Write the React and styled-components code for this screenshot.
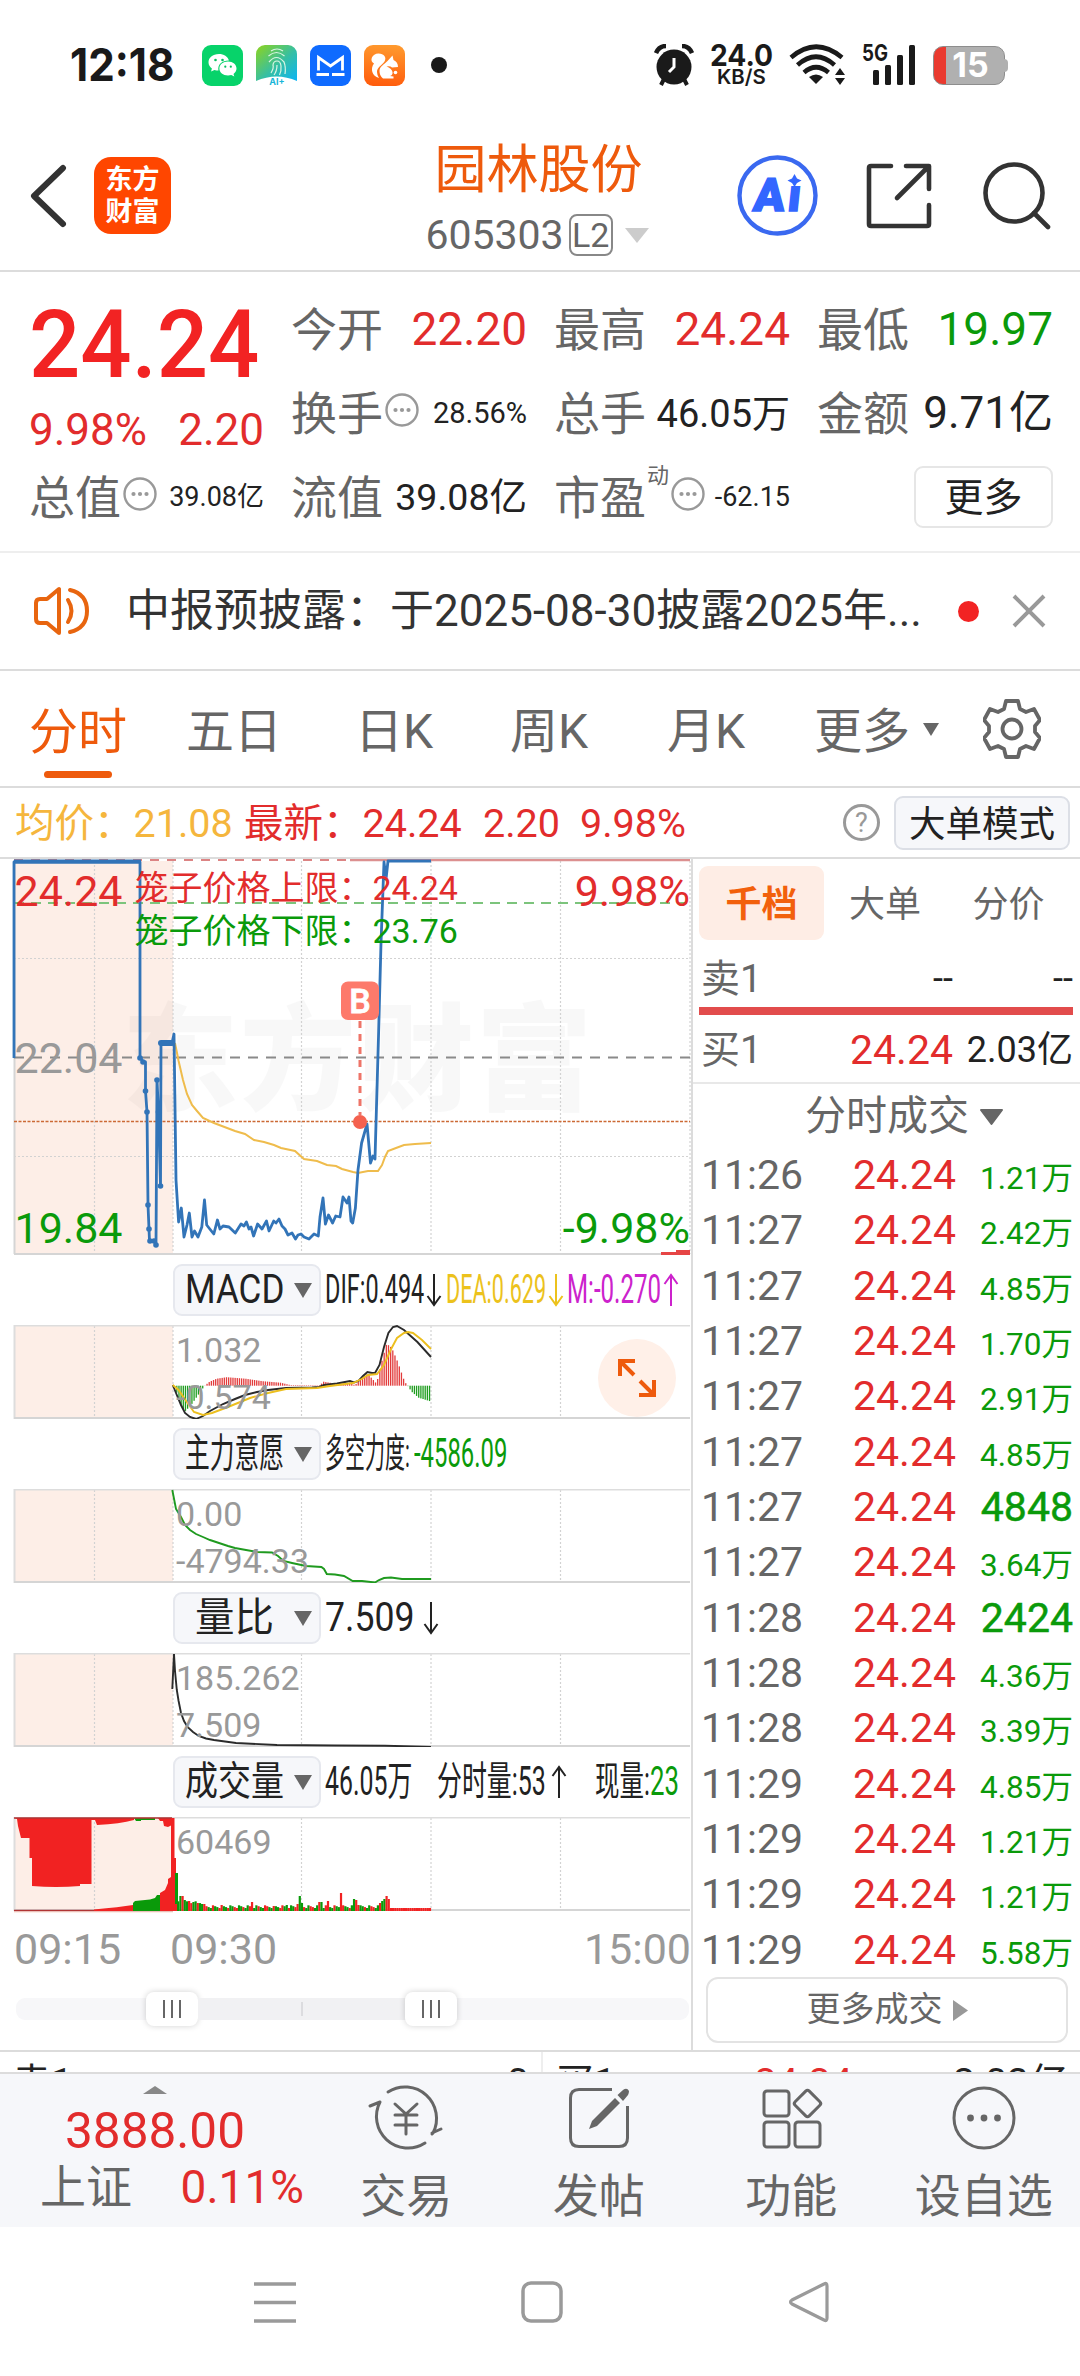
import React, { useLayoutEffect, useRef, useState } from 'react'
import styled, { createGlobalStyle } from 'styled-components'

const RED = '#e22c2c'
const GREEN = '#0a9a0a'
const ORANGE = '#ee5a0c'

const stats = [
  { label: '今开', value: '22.20', size: 46, color: RED },
  { label: '最高', value: '24.24', size: 46, color: RED },
  { label: '最低', value: '19.97', size: 46, color: GREEN },
  { label: '换手', value: '28.56%', size: 29, more: true },
  { label: '总手', value: '46.05万', size: 38 },
  { label: '金额', value: '9.71亿', size: 44 },
]

const tabs = [
  { label: '分时', width: 157, active: true },
  { label: '五日', width: 169 },
  { label: '日K', width: 155 },
  { label: '周K', width: 157 },
  { label: '月K', width: 147 },
]

const trades = [
  ['11:26', '1.21万'],
  ['11:27', '2.42万'],
  ['11:27', '4.85万'],
  ['11:27', '1.70万'],
  ['11:27', '2.91万'],
  ['11:27', '4.85万'],
  ['11:27', '4848'],
  ['11:27', '3.64万'],
  ['11:28', '2424'],
  ['11:28', '4.36万'],
  ['11:28', '3.39万'],
  ['11:29', '4.85万'],
  ['11:29', '1.21万'],
  ['11:29', '1.21万'],
  ['11:29', '5.58万'],
]

// chart coordinates are in pixels of the 691px wide chart column
const priceLine =
  '14,199 14,3 140,3 140,198 143,203 145.5,203 145.5,232 147,253 148,346 149,370 149.5,382 155,382 156,386 157,221 158.5,253 160.5,327 161,184 172,184 174,175 176,321 178.6,363 181.3,349 184,378 187,366 189.3,354 192,378 194.5,372 198,378 201.8,368 204.5,341 206.7,366 209.8,370 213.8,375 217.4,361 220,370 223,367 229,368 235.3,374 241,365 244,367 246.4,363 249,370 251,368 253.6,377 257.6,365 262,370 266.5,362 269,372 273.7,362 276,364 279,360 282,367 285,370 288,376 292,374 295.5,380 298,376 301,375 304,378 309,380 314,375 318.3,377 320,358 323,339 325.4,365 328.5,356 332.6,364 335.7,357 340,358 343,338 347,344 349,338 351,362 352.7,364 355.4,349 358,311 361.6,284 367,265 370.5,304 373,297 375,300 378.6,174 381,84 384,3 386,20 388,2 431,2'
const avgLine =
  '175,184 178.6,202 183,221 187,235 192,246 197,252 203,259 214,264 235,272 245,275 254,281 264,283 274,286 281,289 295,292 304,300 317,302 327,306 336,307 342,310 353,313 358,314 368,312 378,312 382,306 385,298 388,292 396,289 404,286 415,285 431,284'
const difLine =
  '172.8,60 176,68 181,80 185,88 190,92 196,94 203,91 210,86 223,79 235,74 245,70 257,67 268,65 286,63 312,62.5 319,62 324,60 337,58.5 350,56 354,57.5 358.5,56 363,51 367.4,47 372,48 375,48 379.5,40 384,22 388.4,8 393,2 397,1 404,5 417.4,17 431,32'
const deaLine =
  '172.8,60 178.6,65 187.5,78 194,87 203,90 212,88 228,82 250,73 268,68 286,64 317,63 330,61 353,58 361.6,54 368,50 377,49 384,40 390.6,25 397,13 404,8 408,7 413,8 422,15 431,24'
const powerLine =
  '172.3,1 176,20 181,28 185,36 190,41 196,45 203,48 210,51 219,54 228,57 235,59 246,61 257,63 272,63.5 278,67 283.5,72 292,74 306,77 321.4,78 324,80 326.8,85 335,85.5 344,87 352.7,92 362,92 375,93.5 379,91 384,89 391,88.5 402,90 418,90 431,90'
const ratioLine =
  '172.3,36 174,1 175,18 176.8,37 178.6,48 181,60 184,68 187.5,74 193,79 198.7,83 206,85.5 214,87 236,90 277,92 335,92.5 385,92.7 431,94'

// histogram outline as [x, height] stops, interpolated bar by bar
const macdStops = [
  [174, 0], [179, -16], [184, -26], [190, -20], [197, -10], [204, 0], [209, 4], [216, 7], [226, 8.5],
  [245, 7], [262, 4.5], [280, 3], [290, 0.6], [319, 0.4], [323, 4], [335, 2], [350, 3], [354, 0.5], [360, 6],
  [367, 12], [376, 2], [380, 20], [386, 42], [391, 38], [397, 24], [404, 4], [407, 0], [411, -6],
  [418, -12], [431, -16],
]
const macdBars = []
for (let x = 174; x <= 431; x += 2.16) {
  const i = macdStops.findIndex(s => s[0] >= x)
  const [x1, h1] = macdStops[i]
  const [x0, h0] = macdStops[Math.max(0, i - 1)]
  const h = x1 === x0 ? h1 : h0 + ((h1 - h0) * (x - x0)) / (x1 - x0)
  macdBars.push({ x, h })
}

const volumePeaks = { 2: 15, 3: 15, 4: 11, 6: 10, 8: 9, 10: 8, 13: 7, 21: 6, 35: 9, 45: 5, 51: 6, 56: 7, 57: 15, 58: 8, 66: 9, 67: 9, 70: 10, 76: 18, 82: 12, 83: 11, 84: 6, 94: 8, 95: 10, 96: 12, 97: 15, 98: 12 }
const volumeBars = Array.from({ length: 118 }, (_, i) => ({
  x: 175 + i * 2.17,
  h: i > 98 ? 3 : volumePeaks[i] || 3 + ((i * 7) % 4) * 0.9 + (i < 14 ? 4 : 0),
  up: i > 98 || (i * 5) % 7 < 3 || i === 76,
}))

// squeezes its text sideways into a given width
const Fit = ({ w, children }) => {
  const ref = useRef(null)
  const [scale, setScale] = useState(1)
  useLayoutEffect(() => {
    setScale(w / ref.current.offsetWidth)
  }, [w, children])
  return (
    <FitBox $w={w}>
      <FitInner ref={ref} style={{ transform: `scaleX(${scale})` }}>{children}</FitInner>
    </FitBox>
  )
}

const MoreDots = () => (
  <DotsSvg width="34" height="34" viewBox="0 0 34 34">
    <circle cx="17" cy="17" r="15.5" fill="none" stroke="#999" strokeWidth="2.4" />
    <circle cx="10.5" cy="17" r="2.1" fill="#999" />
    <circle cx="17" cy="17" r="2.1" fill="#999" />
    <circle cx="23.5" cy="17" r="2.1" fill="#999" />
  </DotsSvg>
)

const Arrow = ({ up }) => (
  <svg width="17" height="34" viewBox="0 0 17 34">
    <path d={up ? 'M9 33V2M2.5 11L9 2L15.5 11' : 'M9 1V32M2.5 23L9 32L15.5 23'} fill="none" stroke="currentColor" strokeWidth="2" />
  </svg>
)

const Grid = ({ height, time }) => (
  <>
    <rect x="14" y="0" width="159" height={time ? height + 2 : height} fill="#fdeee7" />
    {[94.5, 173, 301.5, 431, 560.5].map(x => (
      <line key={x} x1={x} x2={x} y1="1" y2={height} stroke="#d2d2d2" strokeWidth="1.2" strokeDasharray="2 2" />
    ))}
    <path d={`M14.5 0V${height}`} stroke="#ddd" strokeWidth="2" />
    <path d="M14 .8H690" stroke="#ddd" strokeWidth="1.6" />
    <path d={`M14 ${height - 1}H690`} stroke="#d5d5d5" strokeWidth="2" />
  </>
)

const StatusBar = () => (
  <Status>
    <Clock><Fit w={104}>12:18</Fit></Clock>
    <AppIcons>
      <svg width="41" height="41" viewBox="0 0 41 41">
        <rect width="41" height="41" rx="9" fill="#07d36a" />
        <path d="M17 9C10.500 9 6.500 12.800 6.500 17.300c0 2.700 1.400 4.800 3.400 6.300l-.8 3 3.300-1.700c1.400.4 2.600.6 4 .6-1-6.500 4.200-10.200 10.500-10C25.800 11.500 21.800 9 17 9z" fill="#fff" />
        <path d="M26 16.500c-5 0-8.600 3.100-8.600 7s3.600 7 8.600 7c1.200 0 2.300-.2 3.300-.5l3 1.500-.8-2.600c1.900-1.300 3-3.200 3-5.400 0-3.900-3.500-7-8.500-7z" fill="#fff" />
        <g fill="#07c160"><circle cx="13.500" cy="15" r="1.300" /><circle cx="20.500" cy="15" r="1.300" /><circle cx="23.300" cy="21.700" r="1.100" /><circle cx="28.800" cy="21.700" r="1.100" /></g>
      </svg>
      <svg width="41" height="41" viewBox="0 0 41 41">
        <defs>
          <linearGradient id="finger" x1="0" y1="0" x2="1" y2="1">
            <stop offset="0" stopColor="#8fd41c" /><stop offset=".55" stopColor="#35bfa4" /><stop offset="1" stopColor="#0cb4f5" />
          </linearGradient>
        </defs>
        <path d="M9 0h23a9 9 0 0 1 9 9v27Q20.500 27 0 36V9a9 9 0 0 1 9-9z" fill="url(#finger)" />
        <g fill="none" stroke="#d9f5e4" strokeWidth="1.200">
          <path d="M15 6q6-4 12 0M12.500 11q8-7 16 0M13 17q7.500-9 15 0 2 5 1 12M15 28q3-5 2-8 .5-4 4-4t4 5-1.500 9M18 30q3-4 3-10" />
        </g>
        <text x="21" y="40" fontSize="9" fontFamily="Inter, sans-serif" fontWeight="700" fill="#18b5d8" textAnchor="middle">AI+</text>
      </svg>
      <svg width="41" height="41" viewBox="0 0 41 41">
        <rect width="41" height="41" rx="9" fill="#0f6bff" />
        <path d="M8.500 25.500V12.500L20.500 21 32.500 12.500V25.500M6.500 29.500H19M22 29.500H34.500" fill="none" stroke="#fff" strokeWidth="2.800" />
      </svg>
      <svg width="41" height="41" viewBox="0 0 41 41">
        <defs>
          <linearGradient id="squirrel" x1=".7" y1="0" x2=".6" y2="1">
            <stop offset="0" stopColor="#ff9a2e" /><stop offset="1" stopColor="#ff5d0d" />
          </linearGradient>
        </defs>
        <rect width="41" height="41" rx="9" fill="url(#squirrel)" />
        <path d="M15 33C8 31 6 24 10 18.500C5 16 8 8.500 14.500 8.500C20 8.500 23 12.500 20.500 16.500C17.500 21 13 22 13 27Q13 30 15 33Z" fill="#fff" />
        <path d="M15.500 26C15.500 21.500 20 19.500 23.500 16L28.500 10.500L29.500 15Q34 17 34 22L28 22.500Q26 20.500 22.500 21.500Q27.500 23 28.500 27Q29 30 26 31L29.500 31.500V33.500H19Q15.500 31 15.500 26Z" fill="#fff" />
        <circle cx="31.500" cy="27.500" r="1.800" fill="#fff" />
      </svg>
    </AppIcons>
    <StatusDot />
    <StatusRight>
      <svg width="40" height="42" viewBox="0 0 40 42">
        <circle cx="20" cy="23" r="17.500" fill="#1a1a1a" />
        <path d="M2 9Q5 2 12 2M38 9Q35 2 28 2" stroke="#1a1a1a" strokeWidth="4.500" fill="none" />
        <path d="M10 35L7 41M30 35L33 41" stroke="#1a1a1a" strokeWidth="4" />
        <path d="M20 14V23L15 28" fill="none" stroke="#fff" strokeWidth="3" />
      </svg>
      <NetSpeed>
        <Speed><Fit w={63}>24.0</Fit></Speed>
        <SpeedUnit><Fit w={49}>KB/S</Fit></SpeedUnit>
      </NetSpeed>
      <svg width="57" height="42" viewBox="0 0 57 42">
        <g fill="none" stroke="#1a1a1a" strokeWidth="4.600">
          <path d="M2 13.500Q27 -8 53 13.500" /><path d="M8.500 21Q27 4.500 45.500 21" /><path d="M15 28.500Q27 18 39.500 28.500" />
        </g>
        <path d="M20 33Q27 28 34 33L27 40Z" fill="#1a1a1a" />
        <path d="M51 24L56 31H46ZM51 41L56 34H46Z" fill="#1a1a1a" />
      </svg>
      <Signal>
        <Gen><Fit w={26}>5G</Fit></Gen>
        <svg width="55" height="42" viewBox="0 0 55 42">
          <g fill="#1a1a1a"><rect x="11" y="26" width="6" height="15" rx="1.500" /><rect x="23" y="21" width="6" height="20" rx="1.500" /><rect x="35" y="11" width="6" height="30" rx="1.500" /><rect x="47" y="1" width="6" height="40" rx="1.500" /></g>
        </svg>
      </Signal>
      <Battery><span>15</span></Battery>
    </StatusRight>
  </Status>
)

const Header = () => (
  <HeaderBar>
    <HeaderLeft>
      <svg width="38" height="64" viewBox="0 0 38 64">
        <path d="M34 4L5 32L34 60" fill="none" stroke="#333" strokeWidth="6" strokeLinecap="round" strokeLinejoin="round" />
      </svg>
      <Logo><span>东方</span><span>财富</span></Logo>
    </HeaderLeft>
    <Title>
      <StockName>园林股份</StockName>
      <StockCode>
        605303<Level>L2</Level>
        <svg width="26" height="17" viewBox="0 0 26 17"><path d="M1 1H25L13 16Z" fill="#ccc" /></svg>
      </StockCode>
    </Title>
    <HeaderRight>
      <AiButton>
        <svg width="81" height="81" viewBox="0 0 81 81">
          <circle cx="40.500" cy="40.500" r="38" fill="none" stroke="#3a69f0" strokeWidth="4.400" />
          <path d="M57.500 19L60 23.500 64.500 25.500 60 28 57.500 32 55 28 50.500 25.500 55 23.500Z" fill="#3366ff" />
        </svg>
        <AiText>A<i>ı</i></AiText>
      </AiButton>
      <svg width="66" height="66" viewBox="0 0 66 66">
        <path d="M25 3H5Q3 3 3 5V61Q3 63 5 63H61Q63 63 63 61V42M40 3H63V26M62 4L31 35" fill="none" stroke="#333" strokeWidth="4.600" strokeLinecap="round" strokeLinejoin="round" />
      </svg>
      <svg width="68" height="68" viewBox="0 0 68 68">
        <circle cx="31" cy="31" r="28.500" fill="none" stroke="#333" strokeWidth="4.600" />
        <path d="M51 51L65 65" stroke="#333" strokeWidth="4.600" strokeLinecap="round" />
      </svg>
    </HeaderRight>
  </HeaderBar>
)

const Quote = () => (
  <QuoteGrid>
    <PriceCell>
      <Price><Fit w={230}>24.24</Fit></Price>
      <Change><span>9.98%</span><span>2.20</span></Change>
    </PriceCell>
    {stats.map(s => (
      <Stat key={s.label}>
        <StatLabel>{s.label}</StatLabel>
        {s.more && <MoreDots />}
        <StatValue $size={s.size} $color={s.color}>{s.value}</StatValue>
      </Stat>
    ))}
    <Stat><StatLabel>总值</StatLabel><MoreDots /><StatValue $size={27}>39.08亿</StatValue></Stat>
    <Stat><StatLabel>流值</StatLabel><StatValue $size={37.5}>39.08亿</StatValue></Stat>
    <Stat>
      <StatLabel>市盈</StatLabel><Sup>动</Sup><MoreDots /><StatValue $size={27}>-62.15</StatValue>
    </Stat>
    <Stat><MoreButton>更多</MoreButton></Stat>
  </QuoteGrid>
)

const News = () => (
  <NewsBar>
    <svg width="58" height="50" viewBox="0 0 58 50">
      <g fill="none" stroke="#e8650f" strokeWidth="4" strokeLinejoin="round" strokeLinecap="round">
        <path d="M26 3V47L14 37H7Q3 37 3 33V17Q3 13 7 13H14Z" />
        <path d="M35 14Q42 25 35 36M37 4Q54 8 54 25T37 46" />
      </g>
    </svg>
    <NewsText>中报预披露：于2025-08-30披露2025年...</NewsText>
    <NewsDot />
    <svg width="34" height="34" viewBox="0 0 34 34"><path d="M2 2L32 32M32 2L2 32" stroke="#999" strokeWidth="4" /></svg>
  </NewsBar>
)

const PeriodTabs = () => (
  <TabBar>
    {tabs.map(t => (
      <Tab key={t.label} $w={t.width} $active={t.active}><span>{t.label}</span></Tab>
    ))}
    <Tab $w={169}>
      <span>更多</span>
      <svg width="18" height="15" viewBox="0 0 18 15"><path d="M1 1H17L9 14Z" fill="#666" /></svg>
    </Tab>
    <svg width="58" height="60" viewBox="-29 -30 58 60">
      <path d="M-6 -28H6L8 -20L14 -17L22 -20L28 -9L23 -3V3L28 9L22 20L14 17L8 20L6 28H-6L-8 20L-14 17L-22 20L-28 9L-23 3V-3L-28 -9L-22 -20L-14 -17L-8 -20Z" fill="none" stroke="#666" strokeWidth="3.800" strokeLinejoin="round" />
      <circle r="9.500" fill="none" stroke="#666" strokeWidth="3.800" />
    </svg>
  </TabBar>
)

const InfoRow = () => (
  <Info>
    <InfoText $color="#f5b63d" $w={229}>均价：21.08</InfoText>
    <InfoText $color={RED} $w={239}>最新：24.24</InfoText>
    <InfoText $color={RED} $w={97}>2.20</InfoText>
    <InfoText $color={RED}>9.98%</InfoText>
    <Help>?</Help>
    <ModeButton>大单模式</ModeButton>
  </Info>
)

const PriceChart = () => (
  <ChartSvg width="691" height="396" viewBox="0 0 691 396">
    <rect x="14" y="2" width="159" height="393" fill="#fdeee7" />
    <text x="122" y="242" fontSize="116" fontWeight="900" fill="#000" opacity=".022" textLength="470">东方财富</text>
    {[94.5, 173, 301.5, 431, 560.5, 690].map(x => (
      <line key={x} x1={x} x2={x} y1="2" y2="395" stroke="#d2d2d2" strokeWidth="1.2" strokeDasharray="2 2" />
    ))}
    <path d="M14 99.500H690M14 297.500H690" stroke="#d2d2d2" strokeWidth="1.200" strokeDasharray="2 2" />
    <path d="M14.500 2V395M14 395H690" stroke="#d5d5d5" strokeWidth="2" fill="none" />
    <path d="M14 1H350" stroke="#dc8484" strokeWidth="2" strokeDasharray="9 8" />
    <path d="M350 1H690" stroke="#dc9090" strokeWidth="2.400" />
    <path d="M14 44H690" stroke="#7cc47c" strokeWidth="2" strokeDasharray="10 7" />
    <path d="M14 198.500H690" stroke="#8a8a8a" strokeWidth="2.200" strokeDasharray="10 8" />
    <path d="M14 262.500H690" stroke="#cc6a35" strokeWidth="1.500" strokeDasharray="3 1.500" />
    <path d="M661 395V393H676V391H690V396H661Z" fill="#e64545" />
    <text x="14.500" y="46.500" fontSize="43" fill={RED}>24.24</text>
    <text x="14.500" y="214" fontSize="43" fill="#999">22.04</text>
    <text x="14.500" y="383.500" fontSize="43" fill={GREEN}>19.84</text>
    <text x="690" y="46.500" fontSize="43" fill={RED} textAnchor="end">9.98%</text>
    <text x="690" y="383.500" fontSize="43" fill={GREEN} textAnchor="end">-9.98%</text>
    <polyline points={avgLine} fill="none" stroke="#efbc4c" strokeWidth="2" />
    <polyline points={priceLine} fill="none" stroke="#3274b8" strokeWidth="2.8" strokeLinejoin="round" />
    <path d="M14 2.500H141" stroke="#3274b8" strokeWidth="4" />
    <path d="M161 184H172" stroke="#3274b8" strokeWidth="6" strokeLinecap="round" />
    {[[140, 199], [143, 203], [145.5, 232], [147, 253], [148, 346], [149, 370], [150, 382], [154, 382], [156, 386], [157, 221], [158.5, 253], [160.5, 327]].map(([x, y]) => (
      <circle key={`${x}-${y}`} cx={x} cy={y} r="2.8" fill="#3274b8" />
    ))}
    <text x="134.500" y="40.500" fontSize="34" fill={RED}>笼子价格上限：24.24</text>
    <text x="134.500" y="83.500" fontSize="34" fill={GREEN}>笼子价格下限：23.76</text>
    <path d="M360 162V256" stroke="#ee7468" strokeWidth="3" strokeDasharray="7 6" />
    <circle cx="360" cy="263" r="7" fill="#f4614f" />
    <rect x="341" y="122.500" width="38" height="38.500" rx="7" fill="#fd7a6b" />
    <text x="360" y="153.500" fontSize="34" fontWeight="500" fill="#fff" stroke="#fff" strokeWidth=".8" textAnchor="middle">B</text>
  </ChartSvg>
)

const Picker = ({ children, w }) => (
  <PickerBox>
    <PickerLabel><Fit w={w}>{children}</Fit></PickerLabel>
    <svg width="18" height="15" viewBox="0 0 18 15"><path d="M0 0H18L9 15Z" fill="#666" /></svg>
  </PickerBox>
)

const Indicators = () => (
  <>
    <IndicatorHead>
      <Picker w={99}>MACD</Picker>
      <Reading $color="#222" $w={121}><Fit w={99}>DIF:0.494</Fit><Gap $w={1} /><Arrow /></Reading>
      <Reading $color="#ecc21c" $w={121}><Fit w={100}>DEA:0.629</Fit><Gap $w={1} /><Arrow /></Reading>
      <Reading $color="#cc22cc"><Fit w={94}>M:-0.270</Fit><Gap $w={1} /><Arrow up /></Reading>
    </IndicatorHead>
    <PanelBox>
      <ChartSvg width="691" height="94" viewBox="0 0 691 94">
        <Grid height={94} />
        {macdBars.map(b => (
          <rect key={b.x} x={b.x} y={b.h > 0 ? 60.7 - b.h : 60.7} width="1.3" height={Math.abs(b.h)} fill={b.h > 0 ? '#e23b3b' : '#1f9d1f'} />
        ))}
        <polyline points={difLine} fill="none" stroke="#2b2b2b" strokeWidth="1.9" />
        <polyline points={deaLine} fill="none" stroke="#ecbf1e" strokeWidth="1.9" />
        <text x="176" y="36.500" fontSize="34" fill="#999">1.032</text>
        <text x="176" y="84" fontSize="34" fill="#999">-0.574</text>
      </ChartSvg>
      <Expand>
        <svg width="40" height="40" viewBox="0 0 40 40">
          <path d="M3 18V3H18M4 4L17 17M37 22V37H22M36 36L23 23" fill="none" stroke={ORANGE} strokeWidth="4" />
        </svg>
      </Expand>
    </PanelBox>
    <IndicatorHead>
      <Picker w={99}>主力意愿</Picker>
      <Reading $color="#222" $w={89}><Fit w={85}>多空力度:</Fit></Reading>
      <Reading $color={GREEN}><Fit w={93}>-4586.09</Fit></Reading>
    </IndicatorHead>
    <ChartSvg width="691" height="94" viewBox="0 0 691 94">
      <Grid height={94} />
      <polyline points={powerLine} fill="none" stroke="#1f9a1f" strokeWidth="1.9" />
      <text x="176" y="36.500" fontSize="34" fill="#999">0.00</text>
      <text x="176" y="84" fontSize="34" fill="#999">-4794.33</text>
    </ChartSvg>
    <IndicatorHead>
      <Picker w={79}>量比</Picker>
      <Reading $color="#222"><Fit w={89}>7.509</Fit><Gap $w={8} /><Arrow /></Reading>
    </IndicatorHead>
    <ChartSvg width="691" height="94" viewBox="0 0 691 94">
      <Grid height={94} />
      <polyline points={ratioLine} fill="none" stroke="#2b2b2b" strokeWidth="1.9" />
      <text x="176" y="36.500" fontSize="34" fill="#999">185.262</text>
      <text x="176" y="84" fontSize="34" fill="#999">7.509</text>
    </ChartSvg>
    <IndicatorHead>
      <Picker w={99}>成交量</Picker>
      <Reading $color="#222" $w={112}><Fit w={87}>46.05万</Fit></Reading>
      <Reading $color="#222" $w={158}><Fit w={109}>分时量:53</Fit><Gap $w={4} /><Arrow up /></Reading>
      <Reading $color="#222"><Fit w={55}>现量:</Fit></Reading>
      <Reading $color={GREEN}><Fit w={29}>23</Fit></Reading>
    </IndicatorHead>
    <ChartSvg width="691" height="98" viewBox="0 0 691 98">
      <Grid height={94} time />
      <path d="M14 1L17 2L18 9L21 21H29.500V41H32V69Q56 71 80 69V67H91.500V3L95 3L97 8Q120 7 134 3V1Z" fill="#f12222" />
      <path d="M134 1H155V3H141V4H136Z" fill={GREEN} />
      <path d="M158 1H172V8L168 10L164 9L163 4H160Z" fill="#f12222" />
      <path d="M14 1H172M14 93.500H173" stroke="#b03434" strokeWidth="1.600" />
      <path d="M94 92.500Q120 90 133 88V94H94ZM160 94V76L165 73L168 66V62L171 60V1H174.500V41H176V94Z" fill="#f12222" />
      <path d="M133 94V86L135 84L150 82.500L155 81L157 78H160V94Z" fill={GREEN} />
      <rect x="175" y="56" width="3" height="38" fill={GREEN} />
      {volumeBars.map(b => (
        <rect key={b.x} x={b.x} y={94 - b.h} width="2.2" height={b.h} fill={b.up ? '#f12222' : GREEN} />
      ))}
      <text x="176" y="36.500" fontSize="34" fill="#999">60469</text>
    </ChartSvg>
    <TimeAxis><span>09:15</span><span>09:30</span><span>15:00</span></TimeAxis>
    <Slider>
      <Handle><i /><i /><i /></Handle>
      <Range />
      <Handle><i /><i /><i /></Handle>
    </Slider>
  </>
)

const OrderBook = () => (
  <Book>
    <BookTabs>
      <BookTab $active>千档</BookTab><BookTab>大单</BookTab><BookTab>分价</BookTab>
    </BookTabs>
    <Order $h={64} $top={15}><span>卖1</span><Dark>--</Dark><Dark>--</Dark></Order>
    <RedBar />
    <Order $h={67} $top={4}><span>买1</span><OrderPrice>24.24</OrderPrice><Dark>2.03亿</Dark></Order>
    <DealTitle>
      分时成交
      <svg width="25" height="17" viewBox="0 0 25 17"><path d="M2 1H23L12.500 15Z" fill="#666" stroke="#666" strokeWidth="2" strokeLinejoin="round" /></svg>
    </DealTitle>
    <Deals>
      {trades.map(([time, vol], i) => (
        <Deal key={i}>
          <span>{time}</span>
          <DealPrice>24.24</DealPrice>
          <DealVol $big={!vol.endsWith('万')}>{vol}</DealVol>
        </Deal>
      ))}
    </Deals>
    <MoreDeals>
      更多成交
      <svg width="15" height="21" viewBox="0 0 15 21"><path d="M0 0V21L15 10.500Z" fill="#999" /></svg>
    </MoreDeals>
  </Book>
)

const BottomBar = () => (
  <Bottom>
    <IndexCell>
      <svg width="24" height="8" viewBox="0 0 24 8"><path d="M0 8L12 0L24 8Z" fill="#888" /></svg>
      <IndexValue>3888.00</IndexValue>
      <IndexRow>上证<em>0.11%</em></IndexRow>
    </IndexCell>
    <Action>
      <svg width="76" height="68" viewBox="-38 -34 76 68">
        <g fill="none" stroke="#666" strokeWidth="3" strokeLinecap="round">
          <path d="M-18 -26A31.500 31.500 0 0 1 27 15L26 16M26 15L35 11" />
          <path d="M-26 -16A31.500 31.500 0 0 0 19 25M-26 -16L-36 -12" />
          <path d="M-11 -14L0 -4L11 -14M0 -4V16M-11 -3H11M-11 7H11" />
        </g>
      </svg>
      交易
    </Action>
    <Action>
      <svg width="68" height="68" viewBox="-34 -34 68 68">
        <path d="M13 -28.500H-20Q-28.500 -28.500 -28.500 -20V20Q-28.500 28.500 -20 28.500H20Q28.500 28.500 28.500 20V-12" fill="none" stroke="#666" strokeWidth="3" />
        <path d="M16 -20L21 -15L-2 8L-10 11L-7 3ZM18.500 -23L24 -28Q28 -31 30 -27Q30 -25 29 -23L24 -17Z" fill="#666" />
      </svg>
      发帖
    </Action>
    <Action>
      <svg width="68" height="68" viewBox="-34 -34 68 68">
        <g fill="none" stroke="#666" strokeWidth="3">
          <rect x="-27" y="-27" width="25" height="25" rx="3" /><rect x="-27" y="4" width="25" height="25" rx="3" /><rect x="4" y="4" width="25" height="25" rx="3" />
          <rect x="-10" y="-10" width="20" height="20" rx="2.500" transform="translate(16.500 -14.500) rotate(45)" />
        </g>
      </svg>
      功能
    </Action>
    <Action>
      <svg width="68" height="68" viewBox="-34 -34 68 68">
        <circle r="30" fill="none" stroke="#666" strokeWidth="3" />
        <g fill="#666"><circle cx="-13.500" r="3.400" /><circle r="3.400" /><circle cx="13.500" r="3.400" /></g>
      </svg>
      设自选
    </Action>
  </Bottom>
)

const App = () => (
  <>
    <GlobalStyle />
    <Screen>
      <StatusBar />
      <Header />
      <Quote />
      <News />
      <PeriodTabs />
      <InfoRow />
      <Main>
        <Charts>
          <PriceChart />
          <Indicators />
        </Charts>
        <OrderBook />
      </Main>
      <Depth>
        <DepthHalf><span>卖1</span><b>0</b></DepthHalf>
        <DepthHalf><span>买1</span><em>24.24</em><b>2.03亿</b></DepthHalf>
      </Depth>
      <BottomBar />
      <NavBar>
        <svg width="42" height="42" viewBox="0 0 42 42"><path d="M0 3H42M0 21.500H42M0 40H42" stroke="#9a9a9a" strokeWidth="3.500" /></svg>
        <svg width="42" height="42" viewBox="0 0 42 42"><rect x="2" y="2" width="38" height="38" rx="8" fill="none" stroke="#9a9a9a" strokeWidth="3.500" /></svg>
        <svg width="42" height="42" viewBox="0 0 42 42"><path d="M36 3Q39 1 39 5V37Q39 41 36 39L4 23Q1 21 4 19Z" fill="none" stroke="#9a9a9a" strokeWidth="3.200" /></svg>
      </NavBar>
    </Screen>
  </>
)

export default App

const GlobalStyle = createGlobalStyle`
* {
    box-sizing: border-box;
}
body {
    margin: 0;
    background: #fff;
    font-family: Roboto, "Noto Sans CJK SC", sans-serif;
    color: #666;
}
svg {
    display: block;
    flex: none;
}
em, i {
    font-style: normal;
}
`
const Screen = styled.div`
width: 1080px;
height: 2376px;
overflow: hidden;
display: flex;
flex-direction: column;
background: #fff;
line-height: 1.17;
white-space: nowrap;
> * {
    flex: none;
}
`
const FitBox = styled.span`
display: inline-block;
width: ${props => props.$w}px;
flex: none;
`
const FitInner = styled.span`
display: inline-block;
transform-origin: left center;
white-space: nowrap;
`

const Status = styled.div`
height: 130px;
padding: 0 72px 0 70px;
display: flex;
align-items: center;
color: #1a1a1a;
font-family: Inter, "Noto Sans", sans-serif;
`
const Clock = styled.div`
font-size: 45px;
font-weight: 700;
`
const AppIcons = styled.div`
display: flex;
gap: 13px;
margin-left: 28px;
`
const StatusDot = styled.div`
width: 16px;
height: 16px;
border-radius: 50%;
background: #1a1a1a;
margin-left: 26px;
`
const StatusRight = styled.div`
margin-left: auto;
display: flex;
align-items: center;
gap: 16px;
`
const NetSpeed = styled.div`
display: flex;
flex-direction: column;
align-items: center;
font-weight: 700;
`
const Speed = styled.div`
font-size: 30px;
line-height: 25px;
`
const SpeedUnit = styled.div`
font-size: 20px;
line-height: 19px;
font-weight: 600;
`
const Signal = styled.div`
position: relative;
`
const Gen = styled.div`
position: absolute;
left: 0;
top: 0;
font-size: 23px;
line-height: 18px;
font-weight: 700;
`
const Battery = styled.div`
width: 72px;
height: 39px;
margin-right: 3px;
padding-left: 3px;
position: relative;
border-radius: 10px;
border: 1px solid #8d8d8d;
background: linear-gradient(90deg, #ea3a2f 12px, #b0b0b0 12px);
display: flex;
align-items: center;
justify-content: center;
font-size: 34px;
font-weight: 700;
color: #fff;
&::after {
    content: "";
    position: absolute;
    right: -4px;
    top: 12px;
    width: 4px;
    height: 13px;
    border-radius: 0 4px 4px 0;
    background: #b0b0b0;
}
`

const HeaderBar = styled.div`
height: 142px;
padding: 0 35px 9px 29px;
border-bottom: 2px solid #dcdcdc;
display: grid;
grid-template-columns: 1fr 224px 1fr;
grid-template-rows: 131px;
align-items: center;
`
const HeaderLeft = styled.div`
display: flex;
align-items: center;
gap: 27px;
`
const Logo = styled.div`
width: 77px;
height: 77px;
border-radius: 17px;
background: #ff4600;
color: #fff;
font-size: 27px;
font-weight: 700;
line-height: 32px;
display: flex;
flex-direction: column;
align-items: center;
justify-content: center;
`
const Title = styled.div`
padding-top: 14px;
margin-left: 3px;
display: flex;
flex-direction: column;
align-items: center;
`
const StockName = styled.div`
font-size: 52px;
line-height: 65px;
color: ${ORANGE};
`
const StockCode = styled.div`
display: flex;
align-items: center;
font-size: 41px;
line-height: 64px;
margin-left: -2px;
svg {
    margin-left: 11px;
}
`
const Level = styled.span`
margin-left: 5px;
width: 44px;
height: 42px;
border: 2px solid #888;
border-radius: 8px;
font-size: 34px;
line-height: 39px;
text-align: center;
`
const HeaderRight = styled.div`
display: flex;
align-items: center;
justify-content: flex-end;
gap: 48px;
> svg:last-child {
    margin-left: 3px;
    margin-right: -6px;
}
`
const AiButton = styled.div`
position: relative;
`
const AiText = styled.div`
position: absolute;
inset: 0;
display: flex;
justify-content: center;
font: normal 900 46px/80px Roboto, sans-serif;
color: #3366ff;
-webkit-text-stroke: 1.500px #3366ff;
transform: skewX(-6deg);
i {
    margin-left: 3px;
}
`

const QuoteGrid = styled.div`
height: 281px;
padding: 15px 27px 0 29px;
display: grid;
grid-template-columns: 235px 236px 236px 236px;
grid-template-rows: repeat(3, 84px);
column-gap: 27px;
border-bottom: 2px solid #eee;
color: #222;
`
const PriceCell = styled.div`
grid-row: span 2;
color: ${RED};
`
const Price = styled.div`
font-size: 95px;
font-weight: 500;
line-height: 115px;
color: #f22323;
`
const Change = styled.div`
display: flex;
justify-content: space-between;
font-size: 44px;
line-height: 56px;
`
const Stat = styled.div`
display: flex;
align-items: center;
`
const StatLabel = styled.span`
font-size: 46px;
padding-top: 3px;
color: #666;
`
const DotsSvg = styled.svg`
margin: -6px 0 0 2px;
`
const StatValue = styled.span`
margin-left: auto;
padding-top: 2px;
font-size: ${props => props.$size}px;
color: ${props => props.$color || '#222'};
`
const Sup = styled.span`
font-size: 22px;
color: #666;
align-self: flex-start;
padding-top: 8px;
margin-left: 1px;
`
const MoreButton = styled.div`
margin-left: auto;
width: 139px;
height: 62px;
border: 2px solid #e6e6e6;
border-radius: 9px;
font-size: 39px;
line-height: 60px;
text-align: center;
`

const NewsBar = styled.div`
height: 118px;
border-bottom: 2px solid #dcdcdc;
display: flex;
align-items: center;
padding: 0 34px 0 33px;
`
const NewsText = styled.div`
font-size: 44px;
color: #333;
margin-left: 35px;
padding-top: 2px;
`
const NewsDot = styled.div`
width: 21px;
height: 21px;
border-radius: 50%;
background: #f22323;
margin: 0 33px 0 auto;
`

const TabBar = styled.div`
height: 117px;
border-bottom: 2px solid #dcdcdc;
display: flex;
align-items: center;
padding-left: 29px;
`
const Tab = styled.div`
width: ${props => props.$w}px;
height: 115px;
display: flex;
align-items: center;
gap: 12px;
font-size: ${props => props.$active ? 49 : 48}px;
padding-top: 8px;
color: ${props => props.$active ? ORANGE : '#666'};
span {
    position: relative;
}
span::after {
    content: "";
    display: ${props => props.$active ? 'block' : 'none'};
    position: absolute;
    left: 15px;
    bottom: -17px;
    width: 68px;
    height: 7px;
    border-radius: 4px;
    background: ${ORANGE};
}
svg {
    margin-top: -7px;
}
`

const Info = styled.div`
height: 71px;
border-bottom: 2px solid #dcdcdc;
display: flex;
align-items: center;
padding: 0 10px 0 15px;
font-size: 39.500px;
`
const InfoText = styled.span`
width: ${props => props.$w ? `${props.$w}px` : 'auto'};
padding-top: 3px;
color: ${props => props.$color};
`
const Help = styled.span`
margin-left: auto;
width: 37px;
height: 37px;
border: 3px solid #999;
border-radius: 50%;
color: #999;
font-size: 27px;
line-height: 32px;
text-align: center;
`
const ModeButton = styled.div`
margin-left: 14px;
width: 176px;
height: 54px;
border: 2px solid #dcdfe6;
border-radius: 9px;
background: #f6f7fa;
color: #222;
font-size: 36.500px;
line-height: 53px;
text-align: center;
`

const Main = styled.div`
height: 1193px;
display: flex;
border-bottom: 2px solid #dcdcdc;
`
const Charts = styled.div`
width: 691px;
flex: none;
`
const ChartSvg = styled.svg`
font-family: Roboto, "Noto Sans CJK SC", sans-serif;
`
const PanelBox = styled.div`
position: relative;
`
const Expand = styled.div`
position: absolute;
left: 598px;
top: 14px;
width: 78px;
height: 78px;
border-radius: 50%;
background: #fff0e8;
display: flex;
align-items: center;
justify-content: center;
`
const IndicatorHead = styled.div`
height: 70px;
padding-left: 173px;
display: flex;
align-items: center;
font-size: 40px;
`
const PickerBox = styled.div`
width: 148px;
height: 52px;
margin-right: 4px;
padding-right: 7px;
border: 2px solid #e6e8ee;
border-radius: 9px;
background: #f6f7fa;
color: #222;
display: flex;
align-items: center;
justify-content: space-between;
`
const PickerLabel = styled.div`
flex: 1;
margin-right: 7px;
padding-left: 7px;
display: flex;
justify-content: center;
`
const Reading = styled.div`
width: ${props => props.$w ? `${props.$w}px` : 'auto'};
display: flex;
align-items: center;
color: ${props => props.$color};
`
const Gap = styled.span`
width: ${props => props.$w}px;
`
const TimeAxis = styled.div`
height: 68px;
padding: 0 0 0 14px;
display: flex;
align-items: center;
font-size: 43px;
color: #999;
span {
    width: 156px;
}
span:last-child {
    margin-left: auto;
    width: auto;
}
`
const Slider = styled.div`
height: 22px;
margin: 15px 2px 0 16px;
padding: 0 232px 0 130px;
border-radius: 9px;
background: #f7f7f9;
display: flex;
align-items: center;
`
const Handle = styled.div`
width: 52px;
height: 34px;
border-radius: 8px;
background: #fff;
box-shadow: 0 0 6px rgba(0, 0, 0, 0.18);
display: flex;
align-items: center;
justify-content: center;
gap: 5.500px;
i {
    width: 2.500px;
    height: 18px;
    background: #666;
}
`
const Range = styled.div`
flex: 1;
height: 22px;
background: linear-gradient(#dcdcdf, #dcdcdf) center / 2px 14px no-repeat #f1f1f3;
`

const Book = styled.div`
flex: 1;
border-left: 2px solid #dcdcdc;
`
const BookTabs = styled.div`
display: grid;
grid-template-columns: 125px 122px 125px;
padding: 7px 0 0 6px;
`
const BookTab = styled.div`
height: 74px;
border-radius: 9px;
font-size: 36px;
line-height: 78px;
text-align: center;
font-weight: ${props => props.$active ? 700 : 400};
color: ${props => props.$active ? '#f2600c' : '#666'};
background: ${props => props.$active ? '#feede5' : 'none'};
`
const Order = styled.div`
height: ${props => props.$h}px;
padding: ${props => props.$top}px 7px 0 8px;
display: grid;
grid-template-columns: 152px 100px 1fr;
align-items: center;
justify-items: end;
font-size: 39px;
span:first-child {
    justify-self: start;
}
`
const Dark = styled.span`
font-size: 36px;
color: #222;
`
const OrderPrice = styled.span`
font-size: 41px;
color: ${RED};
`
const RedBar = styled.div`
height: 8px;
margin: 3px 7px 0 6px;
background: #e24c4c;
`
const DealTitle = styled.div`
height: 66px;
padding: 2px 0 0 36px;
border-top: 2px solid #e8e8e8;
display: flex;
align-items: center;
justify-content: center;
gap: 10px;
font-size: 41px;
`
const Deals = styled.div`
height: 830px;
display: grid;
grid-template-rows: repeat(15, 55.350px);
`
const Deal = styled.div`
padding: 0 7px 0 7px;
display: grid;
grid-template-columns: 103px 153px 1fr;
align-items: baseline;
justify-items: end;
font-size: 41px;
line-height: 55px;
`
const DealPrice = styled.span`
color: ${RED};
`
const DealVol = styled.span`
font-size: ${props => props.$big ? 41 : 31.5}px;
color: ${GREEN};
-webkit-text-stroke: ${props => props.$big ? '.5px' : '0'} ${GREEN};
`
const MoreDeals = styled.div`
width: 362px;
height: 66px;
margin: -1px 0 0 13px;
border: 2px solid #e3e3e3;
border-radius: 12px;
display: flex;
align-items: center;
justify-content: center;
gap: 10px;
font-size: 34px;
`

const Depth = styled.div`
height: 22px;
overflow: hidden;
display: flex;
border-bottom: 2px solid #dcdcdc;
`
const DepthHalf = styled.div`
width: 541px;
height: 60px;
padding: 9px 12px 0;
display: flex;
justify-content: space-between;
font-size: 39px;
color: #222;
b {
    font-weight: 400;
}
em {
    color: ${RED};
    margin-left: 38px;
}
& + & {
    width: 539px;
    border-left: 2px solid #eee;
}
`

const Bottom = styled.div`
height: 153px;
background: #f6f7fa;
display: flex;
`
const IndexCell = styled.div`
width: 310px;
padding-top: 12px;
display: flex;
flex-direction: column;
align-items: center;
`
const IndexValue = styled.div`
font-size: 49.500px;
line-height: 74px;
color: ${RED};
`
const IndexRow = styled.div`
width: 264px;
margin-left: 34px;
display: flex;
justify-content: space-between;
font-size: 46px;
line-height: 39px;
em {
    color: ${RED};
}
`
const Action = styled.div`
width: 192.500px;
padding-top: 10px;
display: flex;
flex-direction: column;
align-items: center;
font-size: 46px;
line-height: 88px;
`
const NavBar = styled.div`
height: 149px;
padding: 0 250px 0 254px;
display: flex;
align-items: center;
justify-content: space-between;
`
